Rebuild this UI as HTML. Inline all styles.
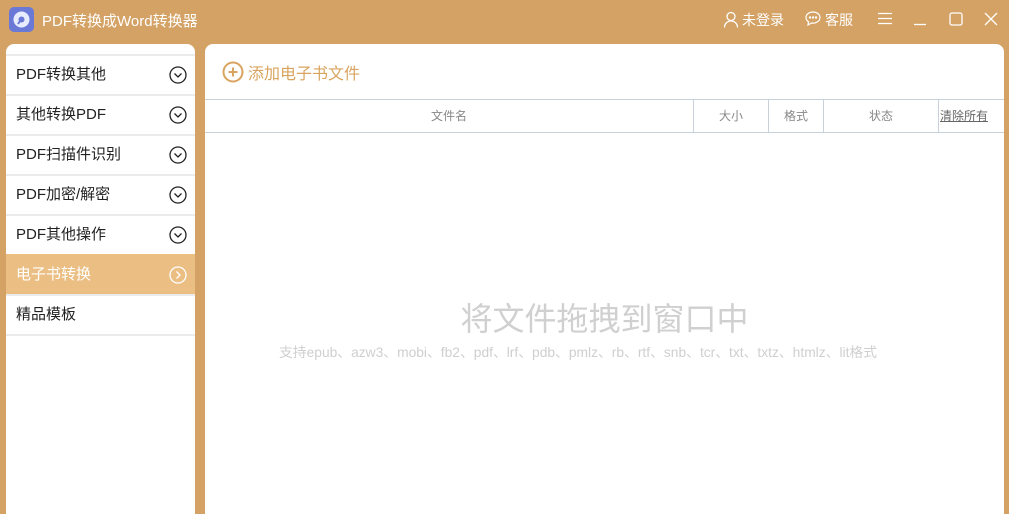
<!DOCTYPE html>
<html><head><meta charset="utf-8"><style>
*{margin:0;padding:0;box-sizing:border-box}
body{width:1009px;height:504px;background:#d4a264;font-family:"Liberation Sans","Noto Sans CJK SC",sans-serif;position:relative;overflow:hidden}
.abs{position:absolute}
.title{left:42px;top:10px;color:#fff;font-size:15px}
.tb{color:#fff;font-size:14px;top:10px}
.side{left:6px;top:44px;width:189px;height:470px;background:#fff;border-radius:8px 8px 0 0}
.item{position:absolute;left:0;width:189px;height:40px;border-top:2px solid #ebebeb;font-size:15px;color:#222;padding-left:10px;line-height:38px}
.item svg{position:absolute;right:8px;top:10px}
.act{background:#ebbf84;color:#fff;border-top-color:#ebbf84}
.main{left:205px;top:44px;width:799px;height:470px;background:#fff;border-radius:8px 8px 0 0}
.hdr{position:absolute;left:0;top:55px;width:799px;height:34px;border-top:1px solid #c8d0da;border-bottom:1px solid #c8d0da}
.c{position:absolute;top:0;height:32px;line-height:32px;text-align:center;font-size:12px;color:#888;border-left:1px solid #c8d0da}
</style></head><body>
<svg class="abs" style="left:8px;top:6px" width="27" height="27" viewBox="0 0 27 27"><rect x="1" y="1" width="25" height="25" rx="5" fill="#6a79d6"/><circle cx="13.5" cy="13.5" r="8" fill="#e8ecff"/><circle cx="13.5" cy="13.5" r="3" fill="#6a79d6"/><path d="M10 18 L14 12" stroke="#6a79d6" stroke-width="2"/></svg>
<div class="abs title">PDF转换成Word转换器</div>
<svg class="abs" style="left:723px;top:11px" width="16" height="17" viewBox="0 0 16 17" fill="none" stroke="#fff" stroke-width="1.3"><circle cx="8" cy="5.5" r="4"/><path d="M1.5 16.5c0-4 3-6.5 6.5-6.5s6.5 2.5 6.5 6.5"/></svg>
<div class="abs tb" style="left:742px">未登录</div>
<svg class="abs" style="left:805px;top:11px" width="16" height="15" viewBox="0 0 16 15" fill="none" stroke="#fff" stroke-width="1.2"><path d="M8 1C4 1 1 3.5 1 6.5c0 1.8 1 3.3 2.5 4.3L3 14l3.5-2c.5.1 1 .1 1.5.1 4 0 7-2.6 7-5.6S12 1 8 1z"/><circle cx="5" cy="6.5" r=".6" fill="#fff"/><circle cx="8" cy="6.5" r=".6" fill="#fff"/><circle cx="11" cy="6.5" r=".6" fill="#fff"/></svg>
<div class="abs tb" style="left:825px">客服</div>
<svg class="abs" style="left:877px;top:12px" width="16" height="13" stroke="#fff" stroke-width="1.3"><path d="M1 1.5h14M1 6.5h14M1 11.5h14"/></svg>
<svg class="abs" style="left:913px;top:12px" width="14" height="14" stroke="#fff" stroke-width="1.3"><path d="M1 12.5h12"/></svg>
<svg class="abs" style="left:949px;top:12px" width="14" height="14" fill="none" stroke="#fff" stroke-width="1.3"><rect x="1" y="1" width="12" height="12" rx="2"/></svg>
<svg class="abs" style="left:984px;top:12px" width="14" height="14" stroke="#fff" stroke-width="1.3"><path d="M1 1L13 13M13 1L1 13"/></svg>

<div class="abs side">
<div class="item" style="top:10px">PDF转换其他<svg width="18" height="18" fill="none" stroke="#222" stroke-width="1.3"><circle cx="9" cy="9" r="8"/><path d="M5.5 7.5L9 11l3.5-3.5"/></svg></div>
<div class="item" style="top:50px">其他转换PDF<svg width="18" height="18" fill="none" stroke="#222" stroke-width="1.3"><circle cx="9" cy="9" r="8"/><path d="M5.5 7.5L9 11l3.5-3.5"/></svg></div>
<div class="item" style="top:90px">PDF扫描件识别<svg width="18" height="18" fill="none" stroke="#222" stroke-width="1.3"><circle cx="9" cy="9" r="8"/><path d="M5.5 7.5L9 11l3.5-3.5"/></svg></div>
<div class="item" style="top:130px">PDF加密/解密<svg width="18" height="18" fill="none" stroke="#222" stroke-width="1.3"><circle cx="9" cy="9" r="8"/><path d="M5.5 7.5L9 11l3.5-3.5"/></svg></div>
<div class="item" style="top:170px">PDF其他操作<svg width="18" height="18" fill="none" stroke="#222" stroke-width="1.3"><circle cx="9" cy="9" r="8"/><path d="M5.5 7.5L9 11l3.5-3.5"/></svg></div>
<div class="item act" style="top:210px">电子书转换<svg width="18" height="18" fill="none" stroke="#fff" stroke-width="1.3"><circle cx="9" cy="9" r="8"/><path d="M7.5 5.5L11 9l-3.5 3.5"/></svg></div>
<div class="item" style="top:250px">精品模板</div>
<div class="item" style="top:290px"></div>
</div>

<div class="abs main">
<svg class="abs" style="left:17px;top:17px" width="22" height="22" fill="none" stroke="#d9a45f" stroke-width="2"><circle cx="11" cy="11" r="9.5"/><path d="M11 6.5v9M6.5 11h9"/></svg>
<div class="abs" style="left:43px;top:16px;font-size:16px;color:#d9a45f">添加电子书文件</div>
<div class="hdr">
<div class="c" style="left:0;width:488px;border-left:none">文件名</div>
<div class="c" style="left:488px;width:75px">大小</div>
<div class="c" style="left:563px;width:55px">格式</div>
<div class="c" style="left:618px;width:115px">状态</div>
<div class="c" style="left:733px;width:66px;color:#666;text-decoration:underline;text-align:left;padding-left:1px">清除所有</div>
</div>
<div class="abs" style="left:0;width:799px;top:250px;text-align:center;font-size:32px;color:#d0d0d0">将文件拖拽到窗口中</div>
<div class="abs" style="left:74px;top:297px;white-space:nowrap;font-size:13.8px;color:#cfcfcf">支持epub、azw3、mobi、fb2、pdf、lrf、pdb、pmlz、rb、rtf、snb、tcr、txt、txtz、htmlz、lit格式</div>
</div>
</body></html>
